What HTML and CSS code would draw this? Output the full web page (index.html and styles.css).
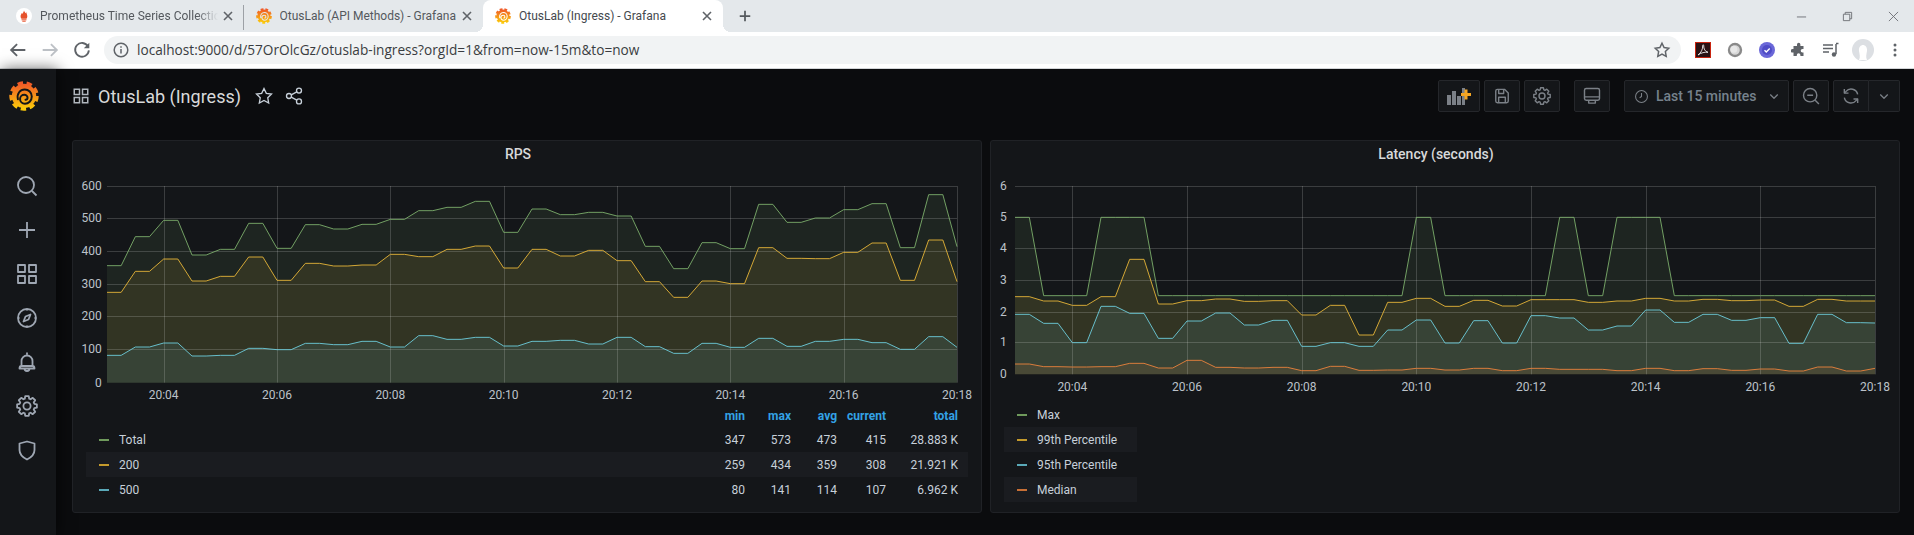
FILE: index.html
```html
<!DOCTYPE html>
<html lang="en">
<head>
    <meta charset="UTF-8">
    <title>OtusLab (Ingress) - Grafana</title>
    <link rel="stylesheet" href="styles.css">
</head>
<body>
    <svg class="svg-defs" aria-hidden="true">
        <defs>
            <linearGradient id="logo-grad" x1="0" y1="0" x2="0" y2="1">
                <stop offset="0" stop-color="#f05a28"/>
                <stop offset="1" stop-color="#fbca0a"/>
            </linearGradient>
            <symbol id="logo" viewBox="0 0 32 32">
                <circle cx="16" cy="16" r="13" fill="url(#logo-grad)"/>
                <circle cx="16" cy="16" r="13.4" fill="none" stroke="url(#logo-grad)" stroke-width="4.6" stroke-dasharray="5.6 3.75"/>
                <path d="M9.500 19.500C8 13.500 12 9 16.800 9C21 9 24.300 12.500 24.300 16.500C24.300 21 20.800 24.300 17 24.300C14 24.300 11.800 22 11.800 19.200C11.800 16.500 14 14.600 16.300 14.600C18.300 14.600 19.800 16.200 19.800 17.800C19.800 19.200 18.800 20 17.600 20" fill="none" stroke="currentColor" stroke-width="2.100" stroke-linecap="round"/>
            </symbol>
            <symbol id="i-gear" viewBox="0 0 24 24">
                <path d="M10.260 2.150L13.740 2.150 14.220 4.730 15.570 5.290 17.740 3.810 20.190 6.260 18.710 8.430 19.270 9.780 21.850 10.260 21.850 13.740 19.270 14.220 18.710 15.570 20.190 17.740 17.740 20.190 15.570 18.710 14.220 19.270 13.740 21.850 10.260 21.850 9.780 19.270 8.430 18.710 6.260 20.190 3.810 17.740 5.290 15.570 4.730 14.220 2.150 13.740 2.150 10.260 4.730 9.780 5.290 8.430 3.810 6.260 6.260 3.810 8.430 5.290 9.780 4.730Z"/>
                <circle cx="12" cy="12" r="3.600"/>
            </symbol>
            <symbol id="i-grid" viewBox="0 0 24 24">
                <rect x="3" y="3" width="7" height="7"/>
                <rect x="14" y="3" width="7" height="7"/>
                <rect x="3" y="14" width="7" height="7"/>
                <rect x="14" y="14" width="7" height="7"/>
            </symbol>
            <symbol id="i-chevron" viewBox="0 0 24 24">
                <path d="M7 10l5 5 5-5"/>
            </symbol>
            <symbol id="i-x" viewBox="0 0 12 12">
                <path d="M2 2l8 8M10 2l-8 8"/>
            </symbol>
            <symbol id="i-star" viewBox="0 0 24 24">
                <path d="M12 3l2.800 5.800 6.200.9-4.500 4.400 1.100 6.300-5.600-3-5.600 3 1.100-6.300L3 9.700l6.200-.9z"/>
            </symbol>
        </defs>
    </svg>

    <div class="tabstrip">
        <div class="tab tab-sep">
            <svg class="favicon" viewBox="0 0 16 16"><circle cx="8" cy="8" r="8" fill="#fff"/><path d="M8 2.500c.4 1.600 1.200 1.800 1.600 2.800.1-.5.4-.8.8-1 0 1.200.9 2.200.9 3.900 0 1.300-.6 2.300-.9 2.500H5.600c-.4-.3-1-1.200-1-2.500 0-1.500.9-2.200 1.100-3.300.3.300.5.600.6 1C6.600 5 7.900 4 8 2.500z" fill="#e6522c"/><rect x="5.500" y="11.300" width="5" height="1" fill="#e6522c"/><rect x="6.300" y="12.700" width="3.400" height="1" fill="#e6522c"/></svg>
            <span class="tab-title tab-fade">Prometheus Time Series Collection</span>
            <svg class="tab-close"><use href="#i-x"/></svg>
        </div>
        <div class="tab">
            <svg class="favicon"><use href="#logo"/></svg>
            <span class="tab-title">OtusLab (API Methods) - Grafana</span>
            <svg class="tab-close"><use href="#i-x"/></svg>
        </div>
        <div class="tab tab-active">
            <svg class="favicon"><use href="#logo"/></svg>
            <span class="tab-title">OtusLab (Ingress) - Grafana</span>
            <svg class="tab-close"><use href="#i-x"/></svg>
        </div>
        <svg class="new-tab" viewBox="0 0 16 16"><path d="M8 2v12M2 8h12"/></svg>
        <div class="win-controls">
            <div class="win-btn"><svg viewBox="0 0 12 12"><path d="M1 6.500h10"/></svg></div>
            <div class="win-btn"><svg viewBox="0 0 12 12"><path d="M1.500 3.500h7v7h-7zM3.500 3.500v-2h7v7h-2"/></svg></div>
            <div class="win-btn"><svg viewBox="0 0 12 12"><path d="M1 1l10 10M11 1L1 11"/></svg></div>
        </div>
    </div>

    <div class="toolbar">
        <div class="nav-btn"><svg viewBox="0 0 24 24"><path d="M20 12H5M11 5.500L4.500 12l6.500 6.500"/></svg></div>
        <div class="nav-btn nav-off"><svg viewBox="0 0 24 24"><path d="M4 12h15M13 5.500l6.500 6.500-6.500 6.500"/></svg></div>
        <div class="nav-btn"><svg viewBox="0 0 24 24"><path d="M18.500 8A7.500 7.500 0 1 0 19.500 12.500"/><path class="solid" d="M20 4v6h-6z"/></svg></div>
        <div class="omnibox">
            <svg class="omni-info" viewBox="0 0 16 16"><circle cx="8" cy="8" r="6.800"/><path d="M8 7v4.500M8 4.300v1.400"/></svg>
            <span class="omni-url">localhost:9000/d/57OrOlcGz/otuslab-ingress?orgId=1&amp;from=now-15m&amp;to=now</span>
            <svg class="omni-star"><use href="#i-star"/></svg>
        </div>
        <div class="ext-btn">
            <svg class="ext-pdf" viewBox="0 0 16 16"><rect x="0.500" y="0.500" width="15" height="15" fill="#2a1214" stroke="#c8230f"/><path d="M3 13c3-2 5-6 4.700-9.500-.1-1 1-1 1 0C8.600 7 10 9.500 13 10.300c-3-.4-7 .4-10 2.700z" fill="none" stroke="#eee" stroke-width="0.900"/></svg>
        </div>
        <div class="ext-btn">
            <svg class="ext-16" viewBox="0 0 16 16"><circle cx="8" cy="8" r="6" fill="#d8d8d8" stroke="#8a8a8a" stroke-width="2.400"/><circle cx="6.800" cy="7.200" r="3.500" fill="#e8e8e8"/></svg>
        </div>
        <div class="ext-btn">
            <svg class="ext-16" viewBox="0 0 16 16"><circle cx="8" cy="8" r="8" fill="#6a67d8"/><circle cx="8" cy="8" r="5" fill="#4f4cc6"/><path d="M5.500 8.200l1.800 1.800 3.400-3.500" fill="none" stroke="#fff" stroke-width="1.400"/></svg>
        </div>
        <div class="ext-btn">
            <svg class="ext-16" viewBox="0 0 16 16"><path d="M6 2.500a1.700 1.700 0 0 1 3.400 0V4h3.100v3h-1a1.800 1.800 0 0 0 0 3.600h1v3.400H9.400v-1a1.800 1.800 0 0 0-3.600 0v1H2.500v-3.400h-1a1.800 1.800 0 0 1 0-3.600h1V4H6z" fill="#5f6368"/></svg>
        </div>
        <div class="ext-btn">
            <svg class="ext-16" viewBox="0 0 16 16"><path d="M0 3h10M0 6.500h10M0 10h6" stroke="#5f6368" stroke-width="1.300"/><path d="M13 2v10" stroke="#5f6368" stroke-width="1.500"/><path d="M13 1.500h2.500" stroke="#5f6368" stroke-width="1.500"/><circle cx="11" cy="12.500" r="2.200" fill="#5f6368"/></svg>
        </div>
        <div class="ext-btn">
            <svg class="ext-avatar" viewBox="0 0 22 22"><circle cx="11" cy="11" r="11" fill="#dcdfe3"/><path d="M7 21c1.500-3 .5-6 0-9-.5-4 2-6 4-6s4.500 2 4 6c-.5 3-1.500 6 0 9" fill="#fff"/></svg>
        </div>
        <div class="ext-btn">
            <svg class="ext-16" viewBox="0 0 16 16"><circle cx="8" cy="3" r="1.500" fill="#5f6368"/><circle cx="8" cy="8" r="1.500" fill="#5f6368"/><circle cx="8" cy="13" r="1.500" fill="#5f6368"/></svg>
        </div>
    </div>

    <div class="app">
        <nav class="sidemenu">
            <div class="side-logo"><svg class="logo-mark"><use href="#logo"/></svg></div>
            <div class="side-item"><svg viewBox="0 0 24 24"><circle cx="11" cy="11" r="8"/><path d="M17 17l4.500 4.500"/></svg></div>
            <div class="side-item"><svg viewBox="0 0 24 24"><path d="M12 4v16M4 12h16"/></svg></div>
            <div class="side-item"><svg><use href="#i-grid"/></svg></div>
            <div class="side-item"><svg viewBox="0 0 24 24"><circle cx="12" cy="12" r="9"/><path d="M15.500 8.500l-2 5-5 2 2-5z"/><path d="M12 3v1.500M12 19.500V21M3 12h1.500M19.500 12H21"/></svg></div>
            <div class="side-item"><svg viewBox="0 0 24 24"><path d="M12 2.500v2M6.500 16v-5a5.500 5.500 0 0 1 11 0v5M4.500 18.500c0-1.500 1-2.500 2-2.500h11c1 0 2 1 2 2.500zM9.500 18.500a2.500 2.500 0 0 0 5 0"/></svg></div>
            <div class="side-item"><svg><use href="#i-gear"/></svg></div>
            <div class="side-item"><svg viewBox="0 0 24 24"><path d="M12 3.500l7.500 2V12c0 4.500-3.500 7.500-7.500 9.500C8 19.500 4.500 16.500 4.500 12V5.500z"/></svg></div>
        </nav>

        <main class="dashboard">
            <header class="dash-header">
                <div class="dash-title">
                    <svg class="title-icon"><use href="#i-grid"/></svg>
                    <span class="title-text">OtusLab (Ingress)</span>
                    <svg class="title-action title-star"><use href="#i-star"/></svg>
                    <svg class="title-action" viewBox="0 0 24 24"><circle cx="18" cy="5.500" r="3"/><circle cx="6" cy="12" r="3"/><circle cx="18" cy="18.500" r="3"/><path d="M8.700 10.600l6.600-3.600M8.700 13.400l6.600 3.600"/></svg>
                </div>
                <div class="dash-tools">
                    <div class="tool-btn tool-add">
                        <svg viewBox="0 0 26 20"><path class="bar" d="M1 9h4v10H1zM6 5h4v14H6zM11 10h4v9h-4zM16 2h3v17h-3z"/><path class="cross" d="M15 8.500h10M20 3.500v10"/></svg>
                    </div>
                    <div class="tool-btn tool-first">
                        <svg viewBox="0 0 24 24"><path d="M4.500 6a2 2 0 0 1 2-2H15l4.500 4.500V18a2 2 0 0 1-2 2h-11a2 2 0 0 1-2-2z"/><path d="M8 4v5h6V4M8 20v-6.500h8V20"/></svg>
                    </div>
                    <div class="tool-btn"><svg><use href="#i-gear"/></svg></div>
                    <div class="tool-btn tool-cycle">
                        <svg viewBox="0 0 24 24"><rect x="3" y="3" width="18" height="14" rx="2"/><path d="M3 13h18M8 17v3.500h8V17"/></svg>
                    </div>
                    <div class="tool-btn tool-time">
                        <svg class="time-clock" viewBox="0 0 24 24"><circle cx="12" cy="12" r="9.500"/><path d="M12 6.500V12l-3 2"/></svg>
                        <span class="time-label">Last 15 minutes</span>
                        <svg class="chevron"><use href="#i-chevron"/></svg>
                    </div>
                    <div class="tool-btn tool-zoom">
                        <svg viewBox="0 0 24 24"><circle cx="11" cy="11" r="8"/><path d="M17 17l4.500 4.500M7.500 11h7"/></svg>
                    </div>
                    <div class="tool-btn tool-refresh">
                        <svg viewBox="0 0 24 24"><path d="M20 10a8 8 0 0 0-14-3.500L4 8.500M4 14a8 8 0 0 0 14 3.500l2-2"/><path d="M4 3.500v5h5M20 20.500v-5h-5"/></svg>
                    </div>
                    <div class="tool-btn tool-refresh-menu"><svg class="chevron"><use href="#i-chevron"/></svg></div>
                </div>
            </header>

            <section class="panels">
                <article class="panel">
                    <h3 class="panel-title">RPS</h3>
                    <svg class="chart" id="chart-rps"></svg>
                    <div class="legend legend-table">
                        <div class="legend-row legend-head">
                            <span></span><span>min</span><span>max</span><span>avg</span><span>current</span><span>total</span>
                        </div>
                        <div class="legend-row">
                            <span class="legend-name"><i class="dash dash-green"></i>Total</span><span>347</span><span>573</span><span>473</span><span>415</span><span>28.883 K</span>
                        </div>
                        <div class="legend-row legend-odd">
                            <span class="legend-name"><i class="dash dash-yellow"></i>200</span><span>259</span><span>434</span><span>359</span><span>308</span><span>21.921 K</span>
                        </div>
                        <div class="legend-row">
                            <span class="legend-name"><i class="dash dash-cyan"></i>500</span><span>80</span><span>141</span><span>114</span><span>107</span><span>6.962 K</span>
                        </div>
                    </div>
                </article>

                <article class="panel">
                    <h3 class="panel-title">Latency (seconds)</h3>
                    <svg class="chart" id="chart-latency"></svg>
                    <div class="legend legend-list">
                        <div class="legend-item"><i class="dash dash-green"></i>Max</div>
                        <div class="legend-item legend-odd"><i class="dash dash-yellow"></i>99th Percentile</div>
                        <div class="legend-item"><i class="dash dash-cyan"></i>95th Percentile</div>
                        <div class="legend-item legend-odd"><i class="dash dash-orange"></i>Median</div>
                    </div>
                </article>
            </section>
        </main>
    </div>

    <script src="chart.js"></script>
</body>
</html>
```

FILE: styles.css
```css
* {
    box-sizing: border-box;
}

html, body {
    height: 100%;
}

body {
    margin: 0;
    display: flex;
    flex-direction: column;
    overflow: hidden;
    background-color: #0b0c0e;
    font-family: Roboto, 'Liberation Sans', sans-serif;
    font-size: 12px;
    color: #c7d0d9;
}

.svg-defs {
    display: block;
    flex: none;
    width: 0;
    height: 0;
}

/* browser chrome */
.tabstrip {
    flex: none;
    display: flex;
    align-items: center;
    height: 32px;
    padding-left: 4px;
    background-color: #e4e8eb;
}

.tab {
    position: relative;
    display: flex;
    align-items: center;
    flex: none;
    width: 239.5px;
    height: 32px;
    padding: 0 8px 0 12px;
    color: #54585d;
}

.tab-sep::after {
    content: '';
    position: absolute;
    right: 0;
    top: 5px;
    height: 25px;
    width: 1px;
    background-color: #9da1a6;
}

.tab-active {
    background-color: #fff;
    border-radius: 8px 8px 0 0;
    color: #45494e;
}

.tab-active::before,
.tab-active::after {
    content: '';
    position: absolute;
    bottom: 0;
    width: 8px;
    height: 8px;
}

.tab-active::before {
    left: -8px;
    background: radial-gradient(circle at 0 0, transparent 8px, #fff 8px);
}

.tab-active::after {
    right: -8px;
    background: radial-gradient(circle at 100% 0, transparent 8px, #fff 8px);
}

.favicon {
    flex: none;
    width: 16px;
    height: 16px;
    margin-right: 8px;
    color: #e4e8eb;
}

.tab-active .favicon {
    color: #fff;
}

.tab-title {
    flex: 1;
    min-width: 0;
    white-space: nowrap;
    overflow: hidden;
    font-size: 12px;
}

.tab-fade {
    -webkit-mask-image: linear-gradient(to right, #000 88%, transparent 100%);
    mask-image: linear-gradient(to right, #000 88%, transparent 100%);
}

.tab-close {
    flex: none;
    width: 12px;
    height: 12px;
    margin: 0 2px 0 4px;
    fill: none;
    stroke: #5f6368;
    stroke-width: 1.6;
}

.new-tab {
    flex: none;
    width: 14px;
    height: 14px;
    margin-left: 15px;
    fill: none;
    stroke: #55595e;
    stroke-width: 2;
}

.win-controls {
    display: flex;
    margin-left: auto;
    margin-right: -2px;
}

.win-btn {
    display: flex;
    align-items: center;
    justify-content: center;
    width: 46px;
    height: 26px;
}

.win-btn svg {
    width: 11px;
    height: 11px;
    fill: none;
    stroke: #6d7075;
    stroke-width: 1;
}

.toolbar {
    flex: none;
    display: flex;
    align-items: center;
    height: 37px;
    padding: 0 3px 1px 2px;
    background-color: #fff;
    border-bottom: 1px solid #d3d5d8;
}

.nav-btn {
    display: flex;
    align-items: center;
    justify-content: center;
    width: 32px;
}

.nav-btn svg {
    width: 22px;
    height: 22px;
    fill: none;
    stroke: #5f6368;
    stroke-width: 2;
}

.nav-btn .solid {
    fill: #5f6368;
    stroke: none;
}

.nav-off svg {
    stroke: #bdc1c6;
}

.omnibox {
    flex: 1;
    display: flex;
    align-items: center;
    height: 28px;
    margin: 0 6px;
    padding: 0 10px 0 9px;
    background-color: #f1f3f4;
    border-radius: 14px;
}

.omni-info {
    flex: none;
    width: 16px;
    height: 16px;
    margin-right: 8px;
    fill: none;
    stroke: #5f6368;
    stroke-width: 1.5;
}

.omni-url {
    flex: 1;
    font-family: 'Open Sans', sans-serif;
    font-size: 13.65px;
    color: #3a3d41;
    white-space: nowrap;
}

.omni-star {
    flex: none;
    width: 18px;
    height: 18px;
    fill: none;
    stroke: #5f6368;
    stroke-width: 2;
}

.ext-btn {
    display: flex;
    align-items: center;
    justify-content: center;
    width: 32px;
}

.ext-pdf,
.ext-16 {
    width: 16px;
    height: 16px;
}

.ext-avatar {
    width: 22px;
    height: 22px;
}

/* grafana */
.app {
    flex: 1;
    min-height: 0;
    display: flex;
}

.sidemenu {
    flex: none;
    width: 56px;
    background-color: #141619;
    box-shadow: 2px 0 14px rgba(0, 0, 0, 0.6);
}

.side-logo {
    height: 54px;
    padding: 11px 0 0 9px;
    margin-bottom: 41px;
}

.logo-mark {
    display: block;
    width: 30px;
    height: 32px;
    color: #141619;
}

.side-item {
    display: flex;
    align-items: center;
    justify-content: center;
    height: 44px;
    padding-right: 3px;
}

.side-item svg {
    width: 24px;
    height: 24px;
    fill: none;
    stroke: #9fa7b3;
    stroke-width: 1.8;
    stroke-linejoin: round;
}

.dashboard {
    flex: 1;
    min-width: 0;
    display: flex;
    flex-direction: column;
    padding: 0 14px 23px 16px;
}

.dash-header {
    flex: none;
    display: flex;
    justify-content: space-between;
    align-items: center;
    height: 32px;
    margin: 11px 0 28px;
}

.dash-title {
    display: flex;
    align-items: center;
}

.title-icon {
    width: 18px;
    height: 18px;
    margin-right: 8px;
    fill: none;
    stroke: #b0b6bd;
    stroke-width: 2;
}

.title-text {
    font-size: 18px;
    color: #d8d9da;
}

.title-action {
    width: 20px;
    height: 20px;
    margin-left: 10px;
    fill: none;
    stroke: #c7d0d9;
    stroke-width: 1.6;
}

.title-star {
    margin-left: 13px;
}

.dash-tools {
    display: flex;
    align-items: center;
}

.tool-btn {
    display: flex;
    align-items: center;
    justify-content: center;
    width: 36px;
    height: 32px;
    margin-left: 4px;
    background-color: #141619;
    border: 1px solid #25272b;
    border-radius: 2px;
}

.tool-btn svg {
    width: 20px;
    height: 20px;
    fill: none;
    stroke: #7b8087;
    stroke-width: 1.7;
    stroke-linejoin: round;
}

.tool-add {
    width: 42px;
}

.tool-add svg {
    width: 26px;
}

.tool-add .bar {
    fill: #7b8087;
    stroke: none;
}

.tool-add .cross {
    stroke: #f5a623;
    stroke-width: 3;
}

.tool-cycle,
.tool-time {
    margin-left: 14px;
}

.tool-time {
    justify-content: flex-start;
    width: 165px;
    padding-left: 9px;
}

.tool-time .time-clock {
    width: 15px;
    height: 15px;
    margin-right: 7px;
}

.time-label {
    font-size: 14px;
    font-weight: 500;
    color: #76828d;
    white-space: nowrap;
}

.tool-time .chevron {
    width: 18px;
    height: 18px;
    margin-left: 8px;
}

.tool-refresh {
    border-radius: 2px 0 0 2px;
}

.tool-refresh-menu {
    width: 31px;
    margin-left: 0;
    border-left: 0;
    border-radius: 0 2px 2px 0;
}

.tool-refresh-menu svg {
    width: 18px;
    height: 18px;
}

.panels {
    flex: 1;
    min-height: 0;
    display: grid;
    grid-template-columns: 1fr 1fr;
    gap: 8px;
}

.panel {
    display: flex;
    flex-direction: column;
    min-width: 0;
    background-color: #141619;
    border: 1px solid #202226;
    border-radius: 3px;
}

.panel-title {
    flex: none;
    margin: 0;
    height: 26px;
    padding-right: 18px;
    line-height: 26px;
    text-align: center;
    font-size: 14px;
    font-weight: 500;
    color: #d8d9da;
}

.chart {
    flex: none;
    display: block;
    width: 100%;
    height: 236px;
}

.axis-label {
    font-size: 12px;
    fill: #bcc2c9;
}

.legend {
    margin: auto 13px 9px;
    transform: translateY(-1px);
}

.legend-row {
    display: grid;
    grid-template-columns: 1fr 46px 46px 46px 49px 72px;
    align-items: center;
    height: 25px;
    padding-right: 10px;
    text-align: right;
}

.legend-head {
    height: 23px;
    font-weight: 700;
    color: #33a2e5;
}

.legend-name {
    display: flex;
    align-items: center;
    padding-left: 13px;
    text-align: left;
}

.legend-odd {
    background-color: #1a1c20;
}

.legend-list {
    width: 133px;
    margin-left: 13px;
}

.legend-item {
    display: flex;
    align-items: center;
    height: 25px;
    padding-left: 13px;
}

.dash {
    flex: none;
    width: 10px;
    height: 2px;
    margin-right: 10px;
}

.dash-green {
    background-color: #6f9a5c;
}

.dash-yellow {
    background-color: #c49a2c;
}

.dash-cyan {
    background-color: #5aa9b8;
}

.dash-orange {
    background-color: #c76f35;
}
```

FILE: chart.js
```js
// Series are 30 pairs of flat 15s samples plus the last point.
// All y values are in 1/3 px, counted from 130px down the page.
const GREEN = '#7eb26d', YELLOW = '#eab839', CYAN = '#6ed0e0', ORANGE = '#ef843c';
const TIMES = ['20:04', '20:06', '20:08', '20:10', '20:12', '20:14', '20:16', '20:18'];
const SVG_TOP = 167;

const charts = [
    {
        id: 'chart-rps',
        left: 34,
        width: 850,
        labelRight: 28.7,
        bottom: 758,
        timeY: 232,
        ticks: [['600', 168], ['500', 265], ['400', 364], ['300', 463], ['200', 559], ['100', 658], ['0', 758]],
        series: [
            [GREEN, [407, 320, 271, 375, 358, 280, 355, 284, 297, 283, 268, 242, 232, 214, 307, 237, 254, 247, 258, 349, 416, 338, 356, 223, 277, 264, 239, 221, 353, 194, 350]],
            [YELLOW, [487, 424, 387, 453, 439, 381, 451, 400, 408, 405, 373, 380, 358, 348, 414, 358, 378, 361, 392, 455, 502, 453, 461, 353, 385, 386, 367, 339, 451, 330, 455]],
            [CYAN, [676, 651, 639, 678, 676, 655, 659, 640, 644, 634, 651, 617, 628, 622, 648, 634, 631, 642, 622, 650, 670, 640, 652, 625, 649, 634, 628, 638, 658, 620, 652]]
        ]
    },
    {
        id: 'chart-latency',
        left: 24,
        width: 860,
        labelRight: 15.7,
        bottom: 733,
        timeY: 224,
        ticks: [['6', 168], ['5', 262], ['4', 355], ['3', 451], ['2', 545], ['1', 637], ['0', 733]],
        series: [
            [GREEN, [262, 497, 497, 262, 262, 497, 497, 497, 497, 497, 497, 497, 497, 497, 262, 497, 497, 497, 497, 262, 497, 262, 262, 497, 497, 497, 497, 497, 497, 497, 497]],
            [YELLOW, [500, 513, 526, 500, 388, 522, 512, 507, 514, 512, 555, 526, 615, 517, 505, 529, 511, 528, 509, 509, 517, 513, 505, 513, 508, 512, 510, 529, 508, 513, 513]],
            [CYAN, [553, 580, 638, 529, 550, 625, 573, 549, 585, 571, 649, 638, 649, 600, 570, 639, 572, 639, 557, 564, 600, 588, 540, 577, 553, 571, 563, 640, 553, 578, 579]],
            [ORANGE, [702, 710, 711, 710, 700, 714, 691, 712, 714, 712, 722, 709, 721, 720, 715, 720, 715, 722, 715, 718, 718, 722, 715, 722, 716, 721, 717, 723, 711, 723, 715]]
        ]
    }
];

function add(parent, tag, attrs, text) {
    const node = document.createElementNS('http://www.w3.org/2000/svg', tag);
    for (const key in attrs) node.setAttribute(key, attrs[key]);
    if (text) node.textContent = text;
    parent.appendChild(node);
    return node;
}

function toY(raw) {
    return raw / 3 + 130 - SVG_TOP;
}

function drawChart(cfg) {
    const svg = document.getElementById(cfg.id);
    const step = cfg.width / 60;
    const right = cfg.left + cfg.width;
    const top = toY(168);
    const bottom = toY(cfg.bottom);
    const lines = [];

    cfg.series.forEach(function(s) {
        const pts = [];
        s[1].forEach(function(raw, i) {
            pts.push((cfg.left + i * 2 * step) + ',' + toY(raw));
            if (i < 30) pts.push((cfg.left + (i * 2 + 1) * step) + ',' + toY(raw));
        });
        lines.push([s[0], pts.join(' ')]);
        add(svg, 'polygon', {
            points: pts.join(' ') + ' ' + right + ',' + bottom + ' ' + cfg.left + ',' + bottom,
            fill: s[0],
            'fill-opacity': 0.1
        });
    });

    const grid = { stroke: '#fff', 'stroke-opacity': 0.17 };
    cfg.ticks.forEach(function(t) {
        const y = Math.round(toY(t[1])) + 0.5;
        if (t[0] !== '0') add(svg, 'line', Object.assign({ x1: cfg.left, x2: right, y1: y, y2: y }, grid));
        add(svg, 'text', { class: 'axis-label', x: cfg.labelRight, y: y + 3.5, 'text-anchor': 'end' }, t[0]);
    });
    TIMES.forEach(function(label, i) {
        const x = cfg.left + (4 + 8 * i) * step;
        const crisp = Math.round(x) + 0.5;
        add(svg, 'line', Object.assign({ x1: crisp, x2: crisp, y1: top, y2: bottom }, grid));
        add(svg, 'text', { class: 'axis-label', x: x, y: cfg.timeY, 'text-anchor': 'middle' }, label);
    });

    lines.forEach(function(l) {
        add(svg, 'polyline', { points: l[1], fill: 'none', stroke: l[0], 'stroke-opacity': 0.88, 'stroke-width': 1 });
    });
}

charts.forEach(drawChart);
```
